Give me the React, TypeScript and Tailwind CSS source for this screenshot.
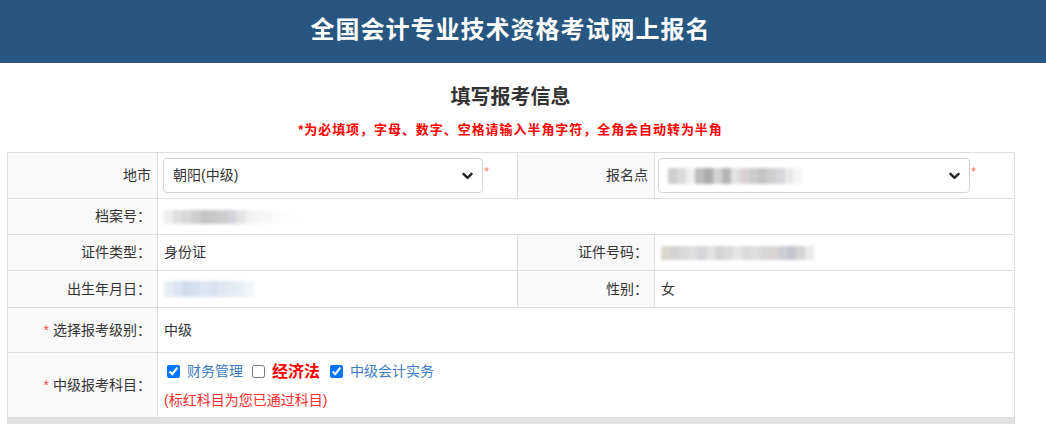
import React from "react";

const font = "font-['Liberation_Sans','Noto_Sans_CJK_SC',sans-serif]";

const Chevron = () => (
  <svg width="11" height="8" viewBox="0 0 11 8" className="shrink-0">
    <path d="M1.5 1.8 L5.5 5.8 L9.5 1.8" fill="none" stroke="#222" strokeWidth="2.4" strokeLinecap="round" strokeLinejoin="round" />
  </svg>
);

// mosaic blocks for the blurred personal data
const Mosaic = ({ colors, h = 14 }: { colors: string[]; h?: number }) => (
  <div className="flex blur-[1.5px] opacity-90">
    {colors.map((c, i) => (
      <div key={i} style={{ backgroundColor: c, height: h }} className="w-[9px]" />
    ))}
  </div>
);

const Select = ({ children }: { children: React.ReactNode }) => (
  <div className="flex items-center">
    <div className="flex items-center justify-between h-[35px] w-full border border-[#d5d5d5] rounded-[4px] bg-white pl-[9px] pr-[9px] text-[14px] text-[#333]">
      <div className="flex items-center">{children}</div>
      <Chevron />
    </div>
    <span className="text-[#ff7a5a] text-[13px] ml-[1px] self-start pt-[4px]">*</span>
  </div>
);

const Label = ({ children, req }: { children: React.ReactNode; req?: boolean }) => (
  <td className="bg-[#f9f9f9] border border-[#dedede] text-right pr-[6px] text-[14px] text-[#333] whitespace-nowrap">
    {req && <span className="text-[#ff4d4d] mr-[4px]">*</span>}
    {children}
  </td>
);

const Value = ({ children, colSpan }: { children?: React.ReactNode; colSpan?: number }) => (
  <td colSpan={colSpan} className="bg-white border border-[#dedede] pl-[6px] text-[14px] text-[#333]">
    {children}
  </td>
);

export default function App() {
  return (
    <div className={`${font} w-[1046px] h-[436px] bg-white overflow-hidden`}>
      <div className="h-[63px] bg-[#275680]">
        <div className="w-[1021px] h-full flex items-center justify-center">
          <h1 className="text-white text-[24px] font-bold tracking-[1px] -mt-[4px]">全国会计专业技术资格考试网上报名</h1>
        </div>
      </div>
      <div className="w-[1021px]">
        <div className="text-center pt-[20px]">
          <h2 className="text-[20px] font-bold text-[#333] leading-[28px]">填写报考信息</h2>
          <p className="text-[13px] font-bold text-[#ff0000] mt-[10px] leading-[18px] tracking-[0.95px]">
            *为必填项，字母、数字、空格请输入半角字符，全角会自动转为半角
          </p>
        </div>
        <div className="ml-[7px] w-[1008px] mt-[13px]">
          <table className="w-full border-collapse table-fixed">
            <colgroup>
              <col className="w-[150px]" />
              <col className="w-[360px]" />
              <col className="w-[137px]" />
              <col />
            </colgroup>
            <tbody>
              <tr className="h-[46px]">
                <Label>地市</Label>
                <td className="bg-white border border-[#dedede] pl-[5px] pr-[28px]">
                  <Select>朝阳(中级)</Select>
                </td>
                <Label>报名点</Label>
                <td className="bg-white border border-[#dedede] pl-[3px] pr-[38px]">
                  <Select>
                    <Mosaic
                      colors={["#c9c9c9", "#d8d8d8", "#ededed", "#b8b8b8", "#a4a4a4", "#cfcfcf", "#b0b0b0", "#e0e0e0", "#d8cece", "#c5c5c5", "#bdbdbd", "#c9c9cb", "#d2d2d6", "#e6e6e6", "#f5f5f5"]}
                      h={16}
                    />
                  </Select>
                </td>
              </tr>
              <tr className="h-[36px]">
                <Label>档案号：</Label>
                <Value colSpan={3}>
                  <Mosaic colors={["#eeeeee", "#dcdcdc", "#d4d4d4", "#cacaca", "#bebebe", "#c3c3c3", "#c8c8c8", "#cfcfd6", "#e0e0e0", "#f0f0f0", "#f4f4f4", "#f8f8f8", "#fbfbfb", "#fdfdfd", "#fefefe"]} />
                </Value>
              </tr>
              <tr className="h-[36px]">
                <Label>证件类型：</Label>
                <Value>身份证</Value>
                <Label>证件号码：</Label>
                <Value>
                  <Mosaic colors={["#d6d2c6", "#cfcfcf", "#d5d5d5", "#dcdcdc", "#d0d0d6", "#e0dede", "#cfcfcf", "#d8d8d8", "#e3e3e3", "#d6d6d6", "#dcdcdc", "#d2d2d2", "#d8d0d0", "#c8c8d0", "#bfbfca", "#d0d0d0", "#e8e8e8"]} />
                </Value>
              </tr>
              <tr className="h-[37px]">
                <Label>出生年月日：</Label>
                <Value>
                  <Mosaic colors={["#e6ecf3", "#d8e2ee", "#cbd9ea", "#d2deec", "#dae4ef", "#d6e0ec", "#dde5ee", "#e1e9f2", "#e7eef6", "#f0f5fa"]} h={16} />
                </Value>
                <Label>性别：</Label>
                <Value>女</Value>
              </tr>
              <tr className="h-[45px]">
                <Label req>选择报考级别：</Label>
                <Value colSpan={3}>中级</Value>
              </tr>
              <tr className="h-[65px]">
                <Label req>中级报考科目：</Label>
                <Value colSpan={3}>
                  <div className="flex items-center gap-[7px] pl-[3px]">
                    <input type="checkbox" defaultChecked className="w-[13px] h-[13px] m-0" />
                    <span className="text-[#3b7cc4] text-[14px]">财务管理</span>
                    <input type="checkbox" className="w-[13px] h-[13px] m-0 ml-[2px]" />
                    <span className="text-[#ff0000] text-[16px] font-bold">经济法</span>
                    <input type="checkbox" defaultChecked className="w-[13px] h-[13px] m-0 ml-[3px]" />
                    <span className="text-[#3b7cc4] text-[14px]">中级会计实务</span>
                  </div>
                  <div className="text-[#ff2a2a] text-[14px] mt-[6px]">(标红科目为您已通过科目)</div>
                </Value>
              </tr>
            </tbody>
          </table>
          <div className="h-[6px] bg-[#e2e2e2] border-x border-[#dedede]" />
        </div>
      </div>
    </div>
  );
}
